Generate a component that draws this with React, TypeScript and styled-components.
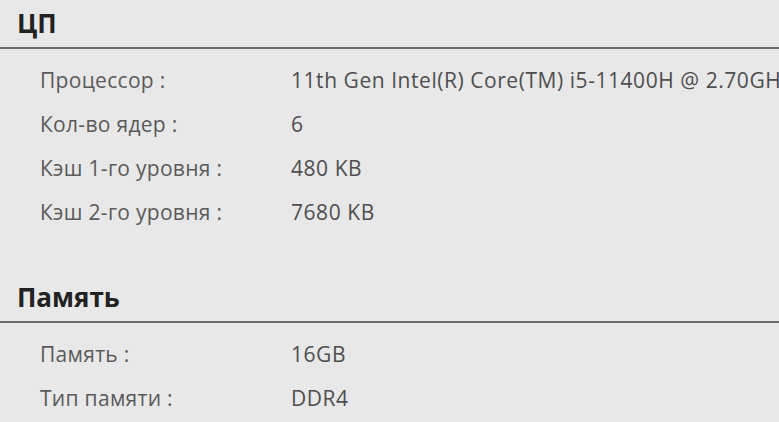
import React from 'react';
import styled, { createGlobalStyle } from 'styled-components';

interface TSpec {
  label: string;
  value: string;
}

interface TSection {
  title: string;
  rows: TSpec[];
}

const sections: TSection[] = [
  {
    title: 'ЦП',
    rows: [
      { label: 'Процессор :', value: '11th Gen Intel(R) Core(TM) i5-11400H @ 2.70GHz' },
      { label: 'Кол-во ядер :', value: '6' },
      { label: 'Кэш 1-го уровня :', value: '480 KB' },
      { label: 'Кэш 2-го уровня :', value: '7680 KB' },
    ],
  },
  {
    title: 'Память',
    rows: [
      { label: 'Память :', value: '16GB' },
      { label: 'Тип памяти :', value: 'DDR4' },
    ],
  },
];

const GlobalStyle = createGlobalStyle`
  html, body {
    margin: 0;
    padding: 0;
    background-color: #e8e8e8;
  }

  body {
    font-family: 'Open Sans', 'Noto Sans', sans-serif;
    overflow: hidden;
  }
`;

export default function App() {
  return (
    <>
      <GlobalStyle />
      <StyledPage>
        {sections.map((section) => (
          <StyledSection key={section.title}>
            <StyledHeader>{section.title}</StyledHeader>
            <StyledList>
              {section.rows.map((row) => (
                <StyledRow key={row.label}>
                  <StyledLabel>{row.label}</StyledLabel>
                  <StyledValue>{row.value}</StyledValue>
                </StyledRow>
              ))}
            </StyledList>
          </StyledSection>
        ))}
      </StyledPage>
    </>
  );
}

const StyledPage = styled.div`
  width: 779px;
  height: 422px;
  display: flex;
  flex-direction: column;
  row-gap: 40px;
  overflow: hidden;
`;

const StyledSection = styled.section`
  display: flex;
  flex-direction: column;
`;

const StyledHeader = styled.div`
  height: 47px;
  line-height: 47px;
  padding-left: 17px;
  border-bottom: 2px solid #6c6c6c;
  font-size: 26px;
  font-weight: bold;
  color: #222;
`;

const StyledList = styled.div`
  display: flex;
  flex-direction: column;
  padding-top: 9px;
`;

const StyledRow = styled.div`
  display: grid;
  grid-template-columns: 251px 1fr;
  height: 44px;
  align-items: center;
  padding-left: 40px;
  font-size: 21px;
  letter-spacing: 0.3px;
  white-space: nowrap;
`;

const StyledLabel = styled.span`
  color: #5a5a5a;
`;

const StyledValue = styled.span`
  color: #4e4e4e;
  letter-spacing: 0.55px;
  overflow: hidden;
`;
